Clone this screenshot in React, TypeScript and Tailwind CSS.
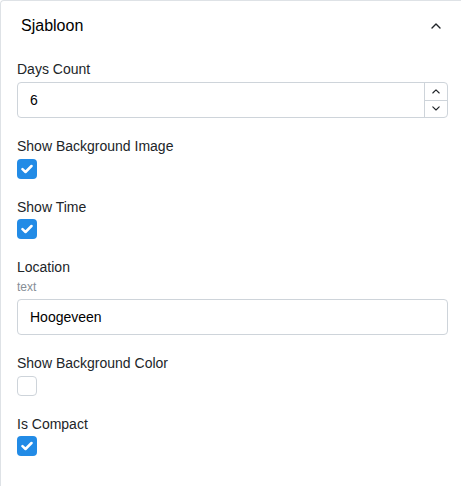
import React from 'react';

const font = { fontFamily: '"Liberation Sans", Arial, sans-serif' };

const Check = () => (
  <svg width="12" height="10" viewBox="0 0 12 10" fill="none">
    <path d="M1.5 5.2 4.5 8 10.5 2" stroke="white" strokeWidth="2.5" strokeLinecap="round" strokeLinejoin="round" />
  </svg>
);

const Chevron = ({ up, size = 10 }: { up?: boolean; size?: number }) => (
  <svg width={size} height={size * 0.6} viewBox="0 0 10 6" fill="none">
    <path
      d={up ? 'M1 5 5 1 9 5' : 'M1 1 5 5 9 1'}
      stroke="#212529"
      strokeWidth="1.4"
      strokeLinecap="round"
      strokeLinejoin="round"
    />
  </svg>
);

const Label = ({ children }: { children: React.ReactNode }) => (
  <div className="text-[14px] leading-[22px] text-[#212529]">{children}</div>
);

const CheckField = ({ label, checked }: { label: string; checked: boolean }) => (
  <div className="flex flex-col">
    <Label>{label}</Label>
    <div
      className={
        checked
          ? 'mt-[1.5px] flex h-5 w-5 items-center justify-center rounded-[4px] bg-[#228be6]'
          : 'mt-[1.5px] h-5 w-5 rounded-[4px] border border-[#ced4da] bg-white'
      }
    >
      {checked && <Check />}
    </div>
  </div>
);

export default function App() {
  return (
    <div className="h-[486px] w-[461px] overflow-hidden bg-white" style={font}>
      <div className="w-[464px] rounded-tl-[4px] border-l border-t border-[#dee2e6] bg-white pb-10">
        {/* Header */}
        <div className="flex h-[49px] items-center justify-between pl-5 pr-5">
          <span className="text-[16px] text-[#000]">Sjabloon</span>
          <span className="mr-[3px]">
            <Chevron up size={10} />
          </span>
        </div>

        {/* Fields */}
        <div className="flex flex-col gap-[17px] px-4 pt-2">
          <div className="flex flex-col">
            <Label>Days Count</Label>
            <div className="mt-[2px] flex h-9 w-full overflow-hidden rounded-[4px] border border-[#ced4da]">
              <div className="flex flex-1 items-center pl-3 text-[14px] text-black">6</div>
              <div className="flex w-[23px] flex-col border-l border-[#ced4da]">
                <div className="flex flex-1 items-center justify-center border-b border-[#ced4da]">
                  <Chevron up size={8} />
                </div>
                <div className="flex flex-1 items-center justify-center">
                  <Chevron size={8} />
                </div>
              </div>
            </div>
          </div>

          <CheckField label="Show Background Image" checked />
          <CheckField label="Show Time" checked />

          <div className="flex flex-col">
            <Label>Location</Label>
            <div className="text-[12px] leading-[19px] text-[#868e96]">text</div>
            <div className="mt-[2px] flex h-9 w-full items-center rounded-[4px] border border-[#ced4da] pl-3 text-[14px] text-black">
              Hoogeveen
            </div>
          </div>

          <CheckField label="Show Background Color" checked={false} />
          <CheckField label="Is Compact" checked />
        </div>
      </div>
    </div>
  );
}
